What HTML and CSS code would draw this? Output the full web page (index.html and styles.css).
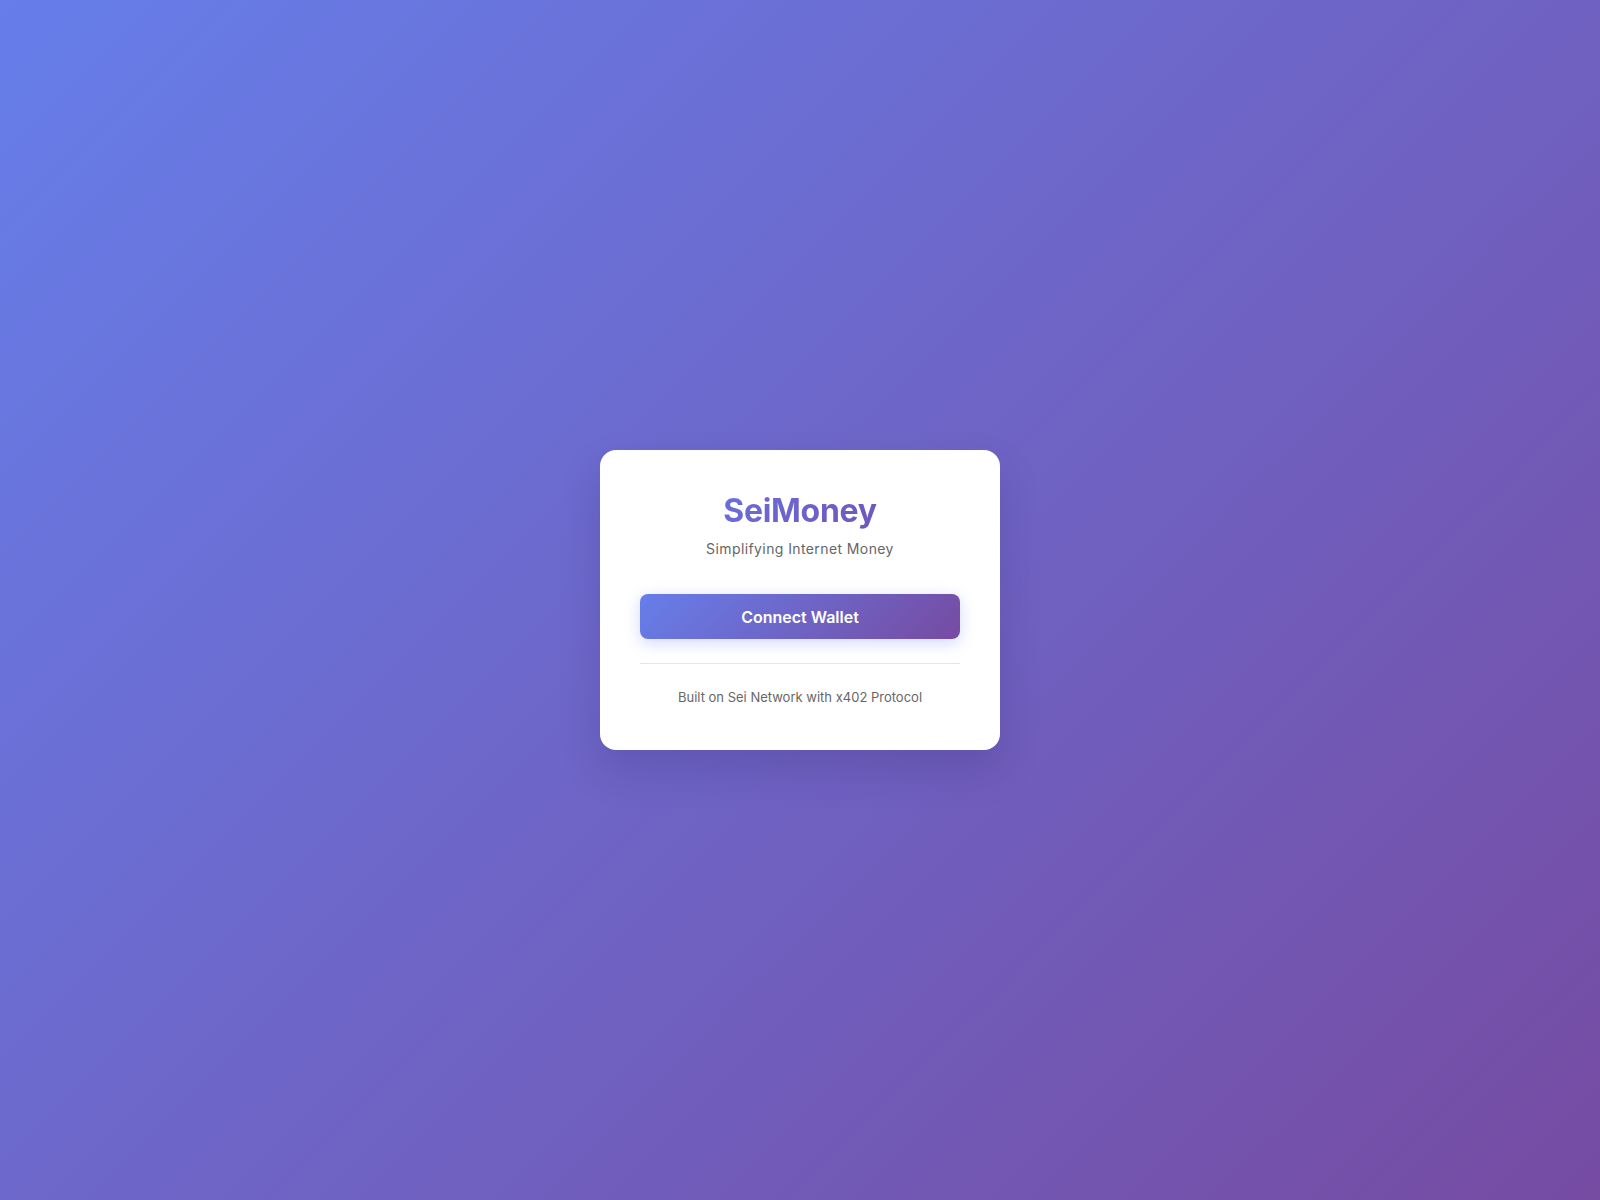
FILE: index.html
```html
<!DOCTYPE html>
<html lang="en">
<head>
<meta charset="utf-8">
<title>SeiMoney</title>
<link rel="stylesheet" href="styles.css">
</head>
<body>
<main class="page">
  <section class="card">
    <h1 class="title">SeiMoney</h1>
    <p class="subtitle">Simplifying Internet Money</p>
    <button class="connect" type="button">Connect Wallet</button>
    <div class="divider"></div>
    <p class="footer">Built on Sei Network with x402 Protocol</p>
  </section>
</main>
</body>
</html>
```
FILE: styles.css
```css
* { box-sizing: border-box; }
html, body { margin: 0; padding: 0; }
body {
  font-family: Inter, "Noto Sans", sans-serif;
  background: linear-gradient(135deg, #667eea 0%, #764ba2 100%);
  min-height: 100vh;
}
.page {
  min-height: 100vh;
  display: flex;
  align-items: center;
  justify-content: center;
}
.card {
  width: 400px;
  height: 300px;
  background: #fff;
  border-radius: 16px;
  padding: 40px;
  box-shadow: 0 20px 40px rgba(40, 30, 90, 0.18);
  display: flex;
  flex-direction: column;
  align-items: center;
}
.title {
  margin: 0 0 6px;
  font-size: 32px;
  line-height: 42px;
  font-weight: 700;
  letter-spacing: -0.3px;
  background: linear-gradient(135deg, #6a6fdc 0%, #6f56b8 100%);
  -webkit-background-clip: text;
  background-clip: text;
  color: transparent;
}
.subtitle {
  margin: 0 0 35px;
  font-size: 14px;
  line-height: 21px;
  letter-spacing: 0.4px;
  color: #666;
}
.connect {
  width: 100%;
  height: 45px;
  border: none;
  border-radius: 8px;
  background: linear-gradient(135deg, #667eea 0%, #764ba2 100%);
  color: #fff;
  font-family: inherit;
  font-size: 16px;
  font-weight: 600;
  box-shadow: 0 4px 15px rgba(102, 126, 234, 0.3);
  cursor: pointer;
}
.divider {
  width: 100%;
  height: 1px;
  background: #e6e6e6;
  margin: 24px 0 24px;
}
.footer {
  margin: 0;
  font-size: 13px;
  line-height: 19px;
  color: #666;
}
```
